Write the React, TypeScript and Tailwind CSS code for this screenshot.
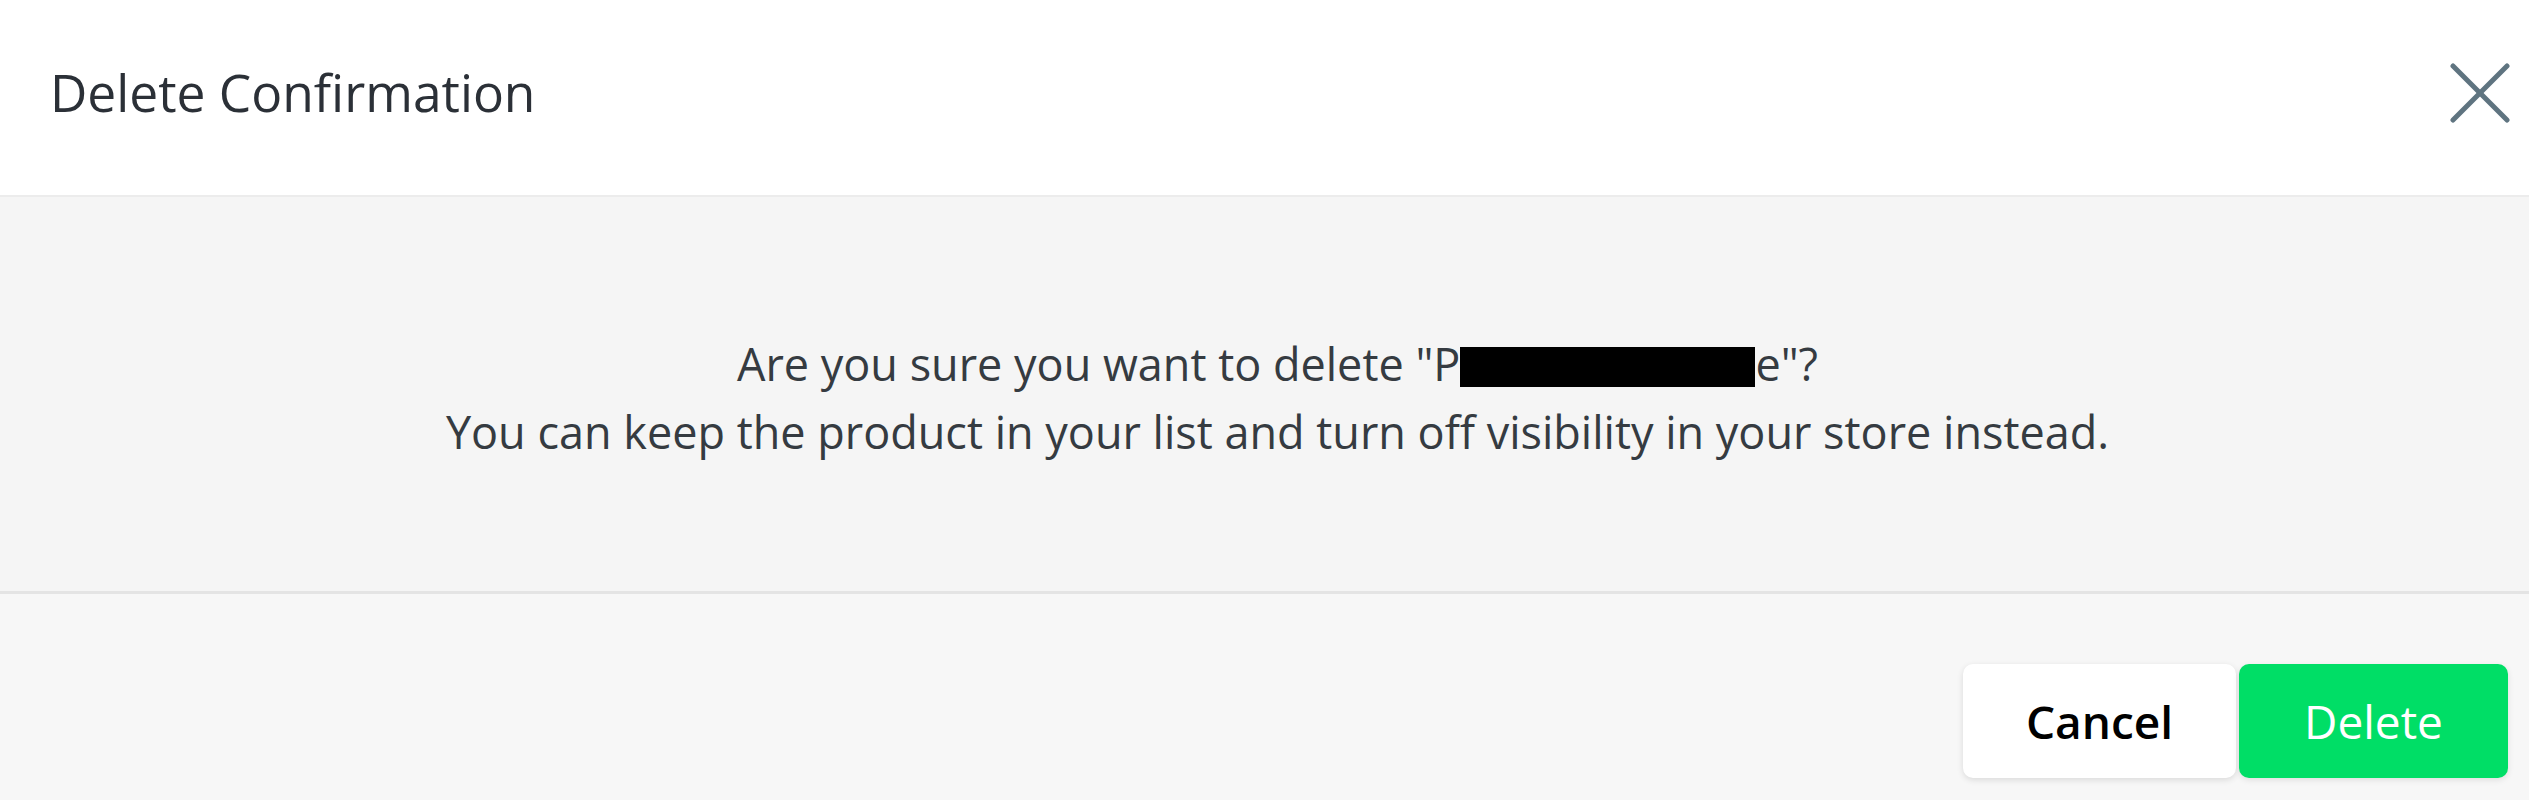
const font = { fontFamily: '"Open Sans", "Noto Sans", sans-serif' };

function CloseIcon() {
  return (
    <svg width="60" height="60" viewBox="0 0 60 60" fill="none" stroke="currentColor" strokeWidth={5} strokeLinecap="round">
      <line x1="3" y1="3" x2="57" y2="57" />
      <line x1="57" y1="3" x2="3" y2="57" />
    </svg>
  );
}

function Header() {
  return (
    <div className="flex h-[197px] items-center justify-between border-b-2 border-[#ececec] bg-white pb-[10px] pl-[50px] pr-[19px]">
      <h2 className="text-[51.5px] font-normal leading-none text-[#2b3037]">Delete Confirmation</h2>
      <button className="flex h-[60px] w-[60px] items-center justify-center text-[#5f7480]">
        <CloseIcon />
      </button>
    </div>
  );
}

function Body() {
  return (
    <div className="flex h-[397px] items-center justify-center border-b-[3px] border-[#e4e4e4] bg-[#f5f5f5] pl-[26px] pt-[8px]">
      <p className="text-center text-[45px] leading-[68px] text-[#353b41]">
        Are you sure you want to delete "P
        <span className="inline-block h-[40px] w-[295px] bg-black align-[-6px]" />
        e"?
        <br />
        You can keep the product in your list and turn off visibility in your store instead.
      </p>
    </div>
  );
}

function Footer() {
  return (
    <div className="flex h-[206px] justify-end gap-[3px] bg-[#f7f7f7] pr-[21px] pt-[70px]">
      <button className="h-[114px] w-[273px] rounded-[10px] bg-white text-[46px] font-semibold text-black shadow-[0_2px_6px_rgba(0,0,0,0.12)]">
        Cancel
      </button>
      <button className="h-[114px] w-[269px] rounded-[10px] bg-[#00de66] text-[46px] font-normal text-white shadow-[0_2px_6px_rgba(0,0,0,0.1)]">
        Delete
      </button>
    </div>
  );
}

export default function App() {
  return (
    <div className="h-[800px] w-full overflow-hidden bg-[#f7f7f7]" style={font}>
      <Header />
      <Body />
      <Footer />
    </div>
  );
}
